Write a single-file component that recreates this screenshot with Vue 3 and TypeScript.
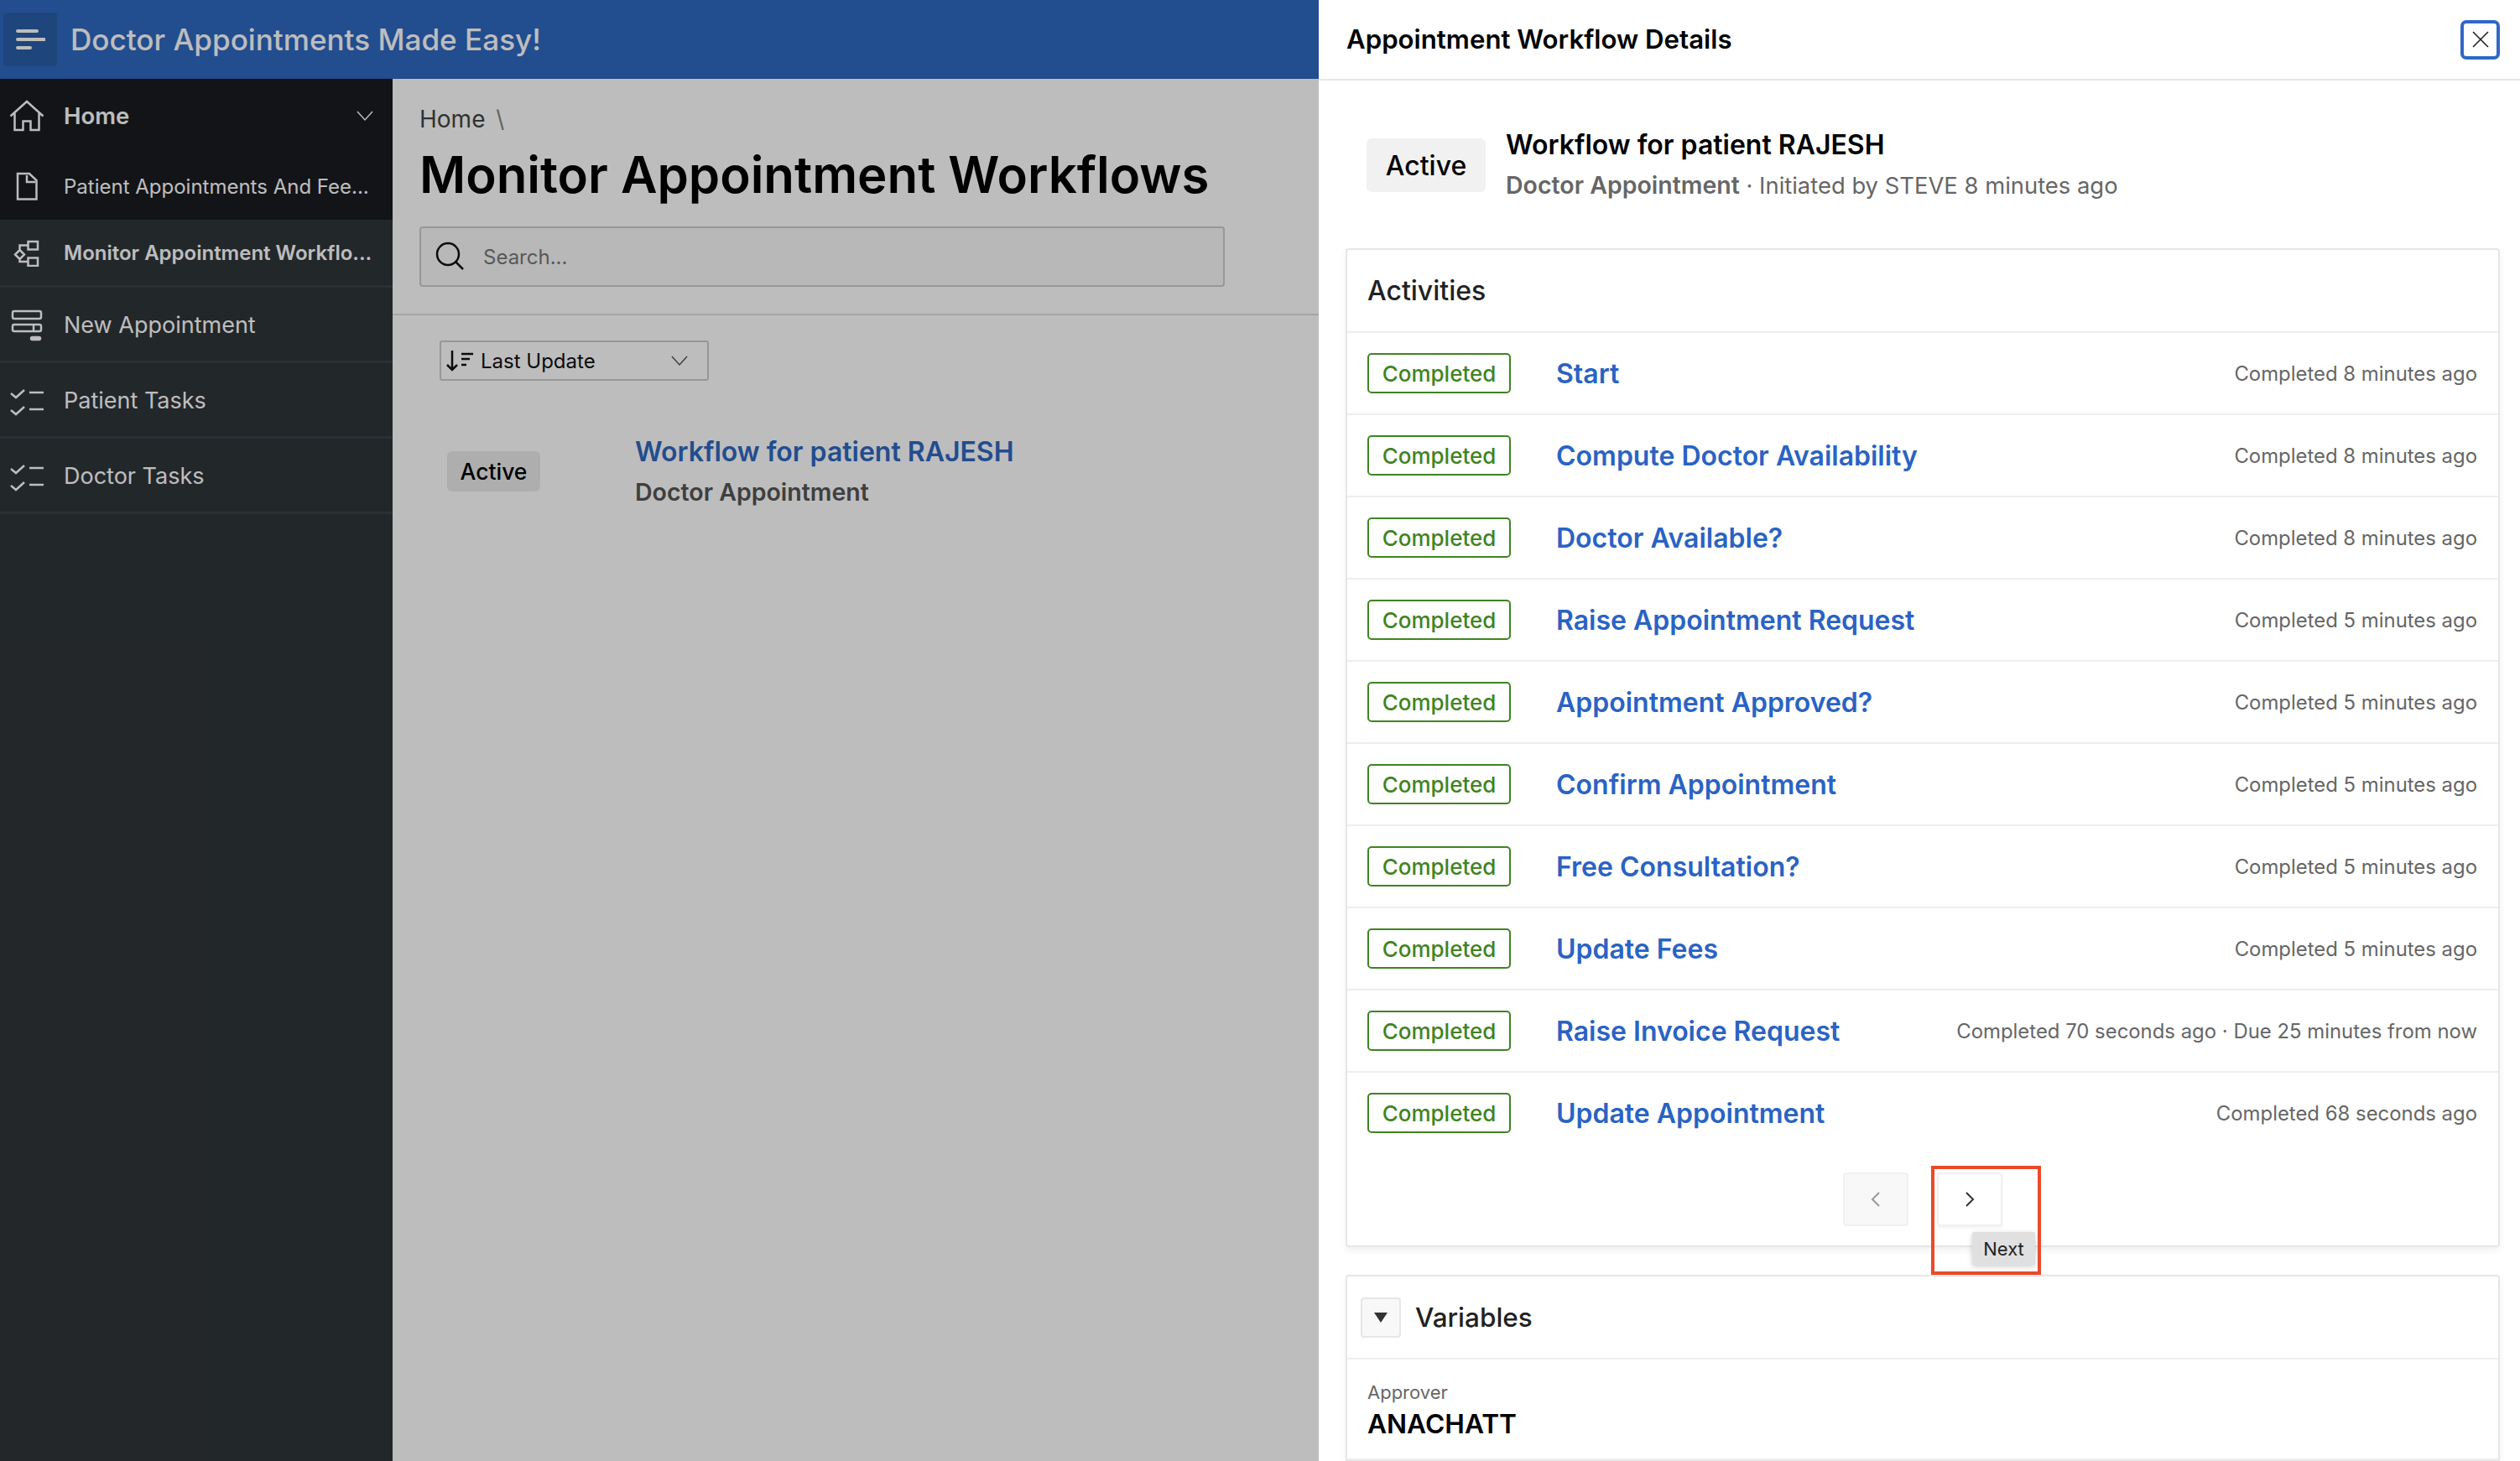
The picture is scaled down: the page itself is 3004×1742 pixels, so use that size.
<template>
  <div class="page">
    <header class="topbar">
      <button class="menu-btn">
        <svg width="36" height="28" viewBox="0 0 36 28"><path d="M3 4H26M3 14H35M3 24H18" stroke="#fff" stroke-width="4" stroke-linecap="round" fill="none" /></svg>
      </button>
      <span class="app-name">Doctor Appointments Made Easy!</span>
    </header>
    <div class="body">
      <nav class="side">
        <div v-for="item in navItems" :key="item.label" class="nav-row" :class="item.cls">
          <span class="nav-icon">
            <svg v-if="item.icon === 'home'" width="42" height="38" viewBox="0 0 42 38" class="ico"><path d="M1.5 19.5 21 2l19.5 17.5M6.5 15.5V36H16.5V25.5H25.5V36H35.5V15.5" /></svg>
            <svg v-else-if="item.icon === 'doc'" width="26" height="34" viewBox="0 0 26 34" class="ico"><path d="M2 2H16L24.500 10V32.500H2ZM13 4V12H23" /></svg>
            <svg v-else-if="item.icon === 'flow'" width="32" height="32" viewBox="0 0 32 32" class="ico"><path d="M7.500 12 13 17.500 7.500 23 2 17.500ZM17.500 2H29V11.500H17.500ZM17.500 21.500H29V31H17.500ZM7.500 12V6.500H17.500M7.500 23V26H17.500" /></svg>
            <svg v-else-if="item.icon === 'form'" width="38" height="38" viewBox="0 0 38 38" class="ico"><rect x="2" y="2" width="34" height="9" rx="2" /><rect x="2" y="18" width="34" height="8" rx="2" /><path d="M27 18V26" /><rect x="24" y="33" width="11" height="3" rx="1.500" fill="#fff" /></svg>
            <svg v-else width="44" height="36" viewBox="0 0 44 36" class="ico"><path d="M3 9 9 14 19 5M25 8H42M3 29 9 34 19 25M25 28H42" /></svg>
          </span>
          <span class="nav-label">{{ item.label }}</span>
          <svg v-if="item.icon === 'home'" class="ico nav-chev" width="22" height="14" viewBox="0 0 22 14"><path d="M2 2 11 12 20 2" /></svg>
        </div>
      </nav>
      <main class="main">
        <section class="hero">
          <div class="crumb">Home <span class="sep">\</span></div>
          <h1>Monitor Appointment Workflows</h1>
          <div class="search">
            <svg width="36" height="36" viewBox="0 0 36 36" class="dark-ico"><circle cx="15" cy="15" r="13" /><path d="M24 24 33 33" /></svg>
            <span>Search...</span>
          </div>
        </section>
        <section class="results">
          <div class="sort">
            <svg width="34" height="26" viewBox="0 0 34 26" class="dark-ico"><path d="M8 1V24M2 18 8 24 14 18M19 5H33M19 11H29M19 18H25" /></svg>
            <span class="sort-text">Last Update</span>
            <svg width="22" height="14" viewBox="0 0 22 14" class="dark-ico thin"><path d="M2 2 11 12 20 2" /></svg>
          </div>
          <div class="result">
            <span class="badge-dim">Active</span>
            <div>
              <div class="result-title">Workflow for patient RAJESH</div>
              <div class="result-sub">Doctor Appointment</div>
            </div>
          </div>
        </section>
      </main>
    </div>
    <div class="overlay"></div>
    <aside class="drawer">
      <div class="drawer-head">
        <span class="drawer-title">Appointment Workflow Details</span>
        <button class="close-btn">
          <svg width="20" height="20" viewBox="0 0 20 20"><path d="M1 1 19 19M19 1 1 19" stroke="#222" stroke-width="1.600" fill="none" /></svg>
        </button>
      </div>
      <div class="summary">
        <span class="badge-active">Active</span>
        <div>
          <div class="summary-title">Workflow for patient RAJESH</div>
          <div class="summary-sub"><b>Doctor Appointment</b> · Initiated by STEVE 8 minutes ago</div>
        </div>
      </div>
      <section class="card">
        <div class="card-head">Activities</div>
        <div v-for="row in activities" :key="row.name" class="act-row">
          <span class="status">Completed</span>
          <a class="act-name">{{ row.name }}</a>
          <span class="act-time">{{ row.time }}</span>
        </div>
        <div class="pager">
          <button class="page-btn off">
            <svg width="12" height="20" viewBox="0 0 12 20"><path d="M10 2 2 10 10 18" stroke="#999" stroke-width="2" fill="none" /></svg>
          </button>
          <button class="page-btn next">
            <svg width="12" height="20" viewBox="0 0 12 20"><path d="M2 2 10 10 2 18" stroke="#333" stroke-width="2" fill="none" /></svg>
            <span class="tooltip">Next</span>
            <span class="callout"></span>
          </button>
        </div>
      </section>
      <section class="card vars">
        <div class="vars-head">
          <button class="toggle"><span class="caret"></span></button>
          <span class="vars-title">Variables</span>
        </div>
        <div class="var-item">
          <div class="var-label">Approver</div>
          <div class="var-value">ANACHATT</div>
        </div>
      </section>
    </aside>
  </div>
</template>

<script setup lang="ts">
interface NavItem {
  label: string
  icon: string
  cls: string
}

interface Activity {
  name: string
  time: string
}

const navItems: NavItem[] = [
  { label: 'Home', icon: 'home', cls: 'home' },
  { label: 'Patient Appointments And Fee...', icon: 'doc', cls: 'sub' },
  { label: 'Monitor Appointment Workflo...', icon: 'flow', cls: 'current' },
  { label: 'New Appointment', icon: 'form', cls: 'plain' },
  { label: 'Patient Tasks', icon: 'tasks', cls: 'plain' },
  { label: 'Doctor Tasks', icon: 'tasks', cls: 'plain' }
]

const activities: Activity[] = [
  { name: 'Start', time: 'Completed 8 minutes ago' },
  { name: 'Compute Doctor Availability', time: 'Completed 8 minutes ago' },
  { name: 'Doctor Available?', time: 'Completed 8 minutes ago' },
  { name: 'Raise Appointment Request', time: 'Completed 5 minutes ago' },
  { name: 'Appointment Approved?', time: 'Completed 5 minutes ago' },
  { name: 'Confirm Appointment', time: 'Completed 5 minutes ago' },
  { name: 'Free Consultation?', time: 'Completed 5 minutes ago' },
  { name: 'Update Fees', time: 'Completed 5 minutes ago' },
  { name: 'Raise Invoice Request', time: 'Completed 70 seconds ago · Due 25 minutes from now' },
  { name: 'Update Appointment', time: 'Completed 68 seconds ago' }
]
</script>

<style>
html, body {
  margin: 0;
  background: #fff;
}
</style>

<style scoped>
.page {
  position: relative;
  width: 3004px;
  height: 1742px;
  overflow: hidden;
  display: flex;
  flex-direction: column;
  font-family: Inter, "Liberation Sans", sans-serif;
  background: #fff;
  color: #000;
}
button {
  font-family: inherit;
  padding: 0;
}
.topbar {
  height: 94px;
  flex: none;
  box-sizing: border-box;
  padding-left: 4px;
  display: flex;
  align-items: center;
  background: #2e68c1;
}
.menu-btn {
  width: 64px;
  height: 64px;
  border: none;
  border-radius: 4px;
  background: #2a5da9;
  display: flex;
  align-items: center;
  justify-content: center;
}
.app-name {
  margin-left: 16px;
  font-size: 35.100px;
  font-weight: 500;
  color: #fff;
}
.body {
  flex: 1;
  display: flex;
  min-height: 0;
}
.side {
  width: 468px;
  flex: none;
  background: #2f3539;
}
.nav-row {
  display: flex;
  align-items: center;
  color: #fff;
  box-sizing: border-box;
  border-bottom: 3px solid #3c4247;
}
.nav-row.home {
  height: 88px;
  background: #1a1c20;
  border-bottom: none;
  font-weight: 600;
  font-size: 27.500px;
}
.nav-row.sub {
  height: 80px;
  background: #1a1c20;
  border-bottom: none;
  font-size: 24px;
}
.nav-row.current {
  height: 81px;
  padding-top: 1px;
  font-weight: 600;
  font-size: 24px;
}
.nav-row.plain {
  height: 90px;
  padding-top: 2px;
  font-size: 27px;
}
.nav-icon {
  width: 64px;
  margin-right: 12px;
  flex: none;
  display: flex;
  justify-content: center;
}
.nav-label {
  white-space: nowrap;
}
.ico {
  fill: none;
  stroke: #fff;
  stroke-width: 2.500;
}
.nav-chev {
  margin-left: auto;
  margin-right: 22px;
  stroke-width: 1.500;
}
.main {
  flex: 1;
  background: #fff;
}
.hero {
  height: 282px;
  box-sizing: border-box;
  padding: 30px 0 0 32px;
  border-bottom: 2px solid #e0e0e0;
}
.crumb {
  font-size: 28px;
  color: #444;
  line-height: 36px;
}
.sep {
  margin-left: 5px;
  color: #888;
}
h1 {
  margin: 10px 0 0;
  font-size: 59.900px;
  line-height: 76px;
  font-weight: 600;
}
.search {
  width: 960px;
  height: 72px;
  margin-top: 24px;
  box-sizing: border-box;
  border: 2px solid #ccc;
  border-radius: 4px;
  background: #f9f9f9;
  display: flex;
  align-items: center;
  padding-left: 17px;
  gap: 21px;
  font-size: 24px;
  color: #777;
}
.dark-ico {
  fill: none;
  stroke: #111;
  stroke-width: 2.500;
}
.dark-ico.thin {
  stroke: #555;
  stroke-width: 1.500;
}
.results {
  padding: 30px 0 0 56px;
}
.sort {
  width: 321px;
  height: 48px;
  box-sizing: border-box;
  border: 2px solid #ccc;
  border-radius: 3px;
  display: flex;
  align-items: center;
  padding: 0 22px 0 5px;
  font-size: 24px;
  color: #111;
}
.sort-text {
  margin-left: 8px;
  flex: 1;
}
.result {
  margin-top: 63px;
  padding-left: 9px;
  display: flex;
  align-items: center;
  gap: 113px;
}
.badge-dim {
  width: 111px;
  height: 48px;
  border-radius: 6px;
  background: #ebebeb;
  display: flex;
  align-items: center;
  justify-content: center;
  font-size: 26.500px;
  font-weight: 500;
}
.result-title {
  font-size: 32px;
  font-weight: 600;
  color: #2e68c1;
  line-height: 44px;
}
.result-sub {
  font-size: 28.500px;
  font-weight: 600;
  color: #555;
  margin-top: 6px;
  line-height: 40px;
}
.overlay {
  position: absolute;
  inset: 0;
  background: rgba(0, 0, 0, 0.26);
}
.drawer {
  position: absolute;
  top: 0;
  right: 0;
  bottom: 0;
  width: 1432px;
  background: #fff;
  display: flex;
  flex-direction: column;
  box-sizing: border-box;
  padding: 0 24px 0 32px;
}
.drawer-head {
  height: 96px;
  flex: none;
  margin: 0 -24px 0 -32px;
  padding: 0 24px 0 33px;
  box-sizing: border-box;
  border-bottom: 2px solid #e6e6e6;
  display: flex;
  align-items: center;
  justify-content: space-between;
}
.drawer-title {
  font-size: 31.200px;
  font-weight: 600;
}
.close-btn {
  width: 47px;
  height: 47px;
  border: 4px solid #2f67c4;
  border-radius: 7px;
  background: #fff;
  display: flex;
  align-items: center;
  justify-content: center;
}
.summary {
  height: 200px;
  flex: none;
  box-sizing: border-box;
  padding: 2px 0 0 25px;
  display: flex;
  align-items: center;
  gap: 24px;
}
.badge-active {
  width: 142px;
  height: 64px;
  border-radius: 6px;
  background: #f1f1f1;
  display: flex;
  align-items: center;
  justify-content: center;
  font-size: 32px;
  font-weight: 500;
}
.summary-title {
  font-size: 32px;
  font-weight: 600;
  line-height: 44px;
}
.summary-sub {
  margin-top: 3px;
  font-size: 27.400px;
  line-height: 46px;
  color: #666;
}
.summary-sub b {
  font-size: 28.500px;
  font-weight: 600;
}
.card {
  flex: none;
  border: 2px solid #e6e6e6;
  border-radius: 4px;
  box-shadow: 0 4px 8px rgba(0, 0, 0, 0.06);
  background: #fff;
}
.card-head {
  height: 97px;
  box-sizing: border-box;
  padding-left: 24px;
  display: flex;
  align-items: center;
  font-size: 32px;
  font-weight: 500;
  color: #222;
}
.act-row {
  height: 98px;
  box-sizing: border-box;
  border-top: 2px solid #eee;
  padding: 0 25px 0 24px;
  display: flex;
  align-items: center;
}
.status {
  width: 171px;
  height: 48px;
  box-sizing: border-box;
  border: 2px solid #3f8421;
  border-radius: 5px;
  display: flex;
  align-items: center;
  justify-content: center;
  font-size: 26px;
  font-weight: 500;
  color: #3f8421;
}
.act-name {
  margin-left: 54px;
  font-size: 32px;
  font-weight: 600;
  color: #2a63c3;
}
.act-time {
  margin-left: auto;
  font-size: 23.900px;
  color: #666;
}
.pager {
  height: 110px;
  box-sizing: border-box;
  padding-top: 23px;
  display: flex;
  justify-content: center;
  gap: 34px;
}
.page-btn {
  position: relative;
  width: 78px;
  height: 64px;
  box-sizing: border-box;
  border: 2px solid #f0f0f0;
  border-radius: 4px;
  background: #fff;
  box-shadow: 0 2px 3px rgba(0, 0, 0, 0.06);
  display: flex;
  align-items: center;
  justify-content: center;
}
.page-btn.off {
  background: #f8f8f8;
  box-shadow: none;
}
.tooltip {
  position: absolute;
  left: 40px;
  top: 69px;
  width: 75px;
  height: 39px;
  background: #e0e0e0;
  border-radius: 2px;
  box-shadow: 0 2px 6px rgba(0, 0, 0, 0.2);
  display: flex;
  align-items: center;
  justify-content: center;
  font-size: 22px;
  color: #222;
  z-index: 2;
}
.callout {
  position: absolute;
  left: -9px;
  top: -10px;
  width: 131px;
  height: 130px;
  box-sizing: border-box;
  border: 4px solid #ea4a2a;
  z-index: 3;
}
.vars {
  margin-top: 33px;
}
.vars-head {
  height: 97px;
  box-sizing: border-box;
  padding-left: 16px;
  display: flex;
  align-items: center;
  gap: 17px;
}
.toggle {
  width: 48px;
  height: 48px;
  border: 2px solid #e6e6e6;
  border-radius: 4px;
  background: #f8f8f8;
  display: flex;
  align-items: center;
  justify-content: center;
}
.caret {
  width: 0;
  height: 0;
  border-left: 8px solid transparent;
  border-right: 8px solid transparent;
  border-top: 12px solid #333;
}
.vars-title {
  font-size: 31.500px;
  font-weight: 500;
  color: #222;
}
.var-item {
  border-top: 2px solid #eee;
  border-bottom: 2px solid #eee;
  height: 122px;
  box-sizing: border-box;
  padding: 24px 0 0 24px;
}
.var-label {
  font-size: 22px;
  line-height: 30px;
  color: #666;
}
.var-value {
  font-size: 31.700px;
  line-height: 40px;
  font-weight: 600;
  margin-top: 3px;
}
</style>
